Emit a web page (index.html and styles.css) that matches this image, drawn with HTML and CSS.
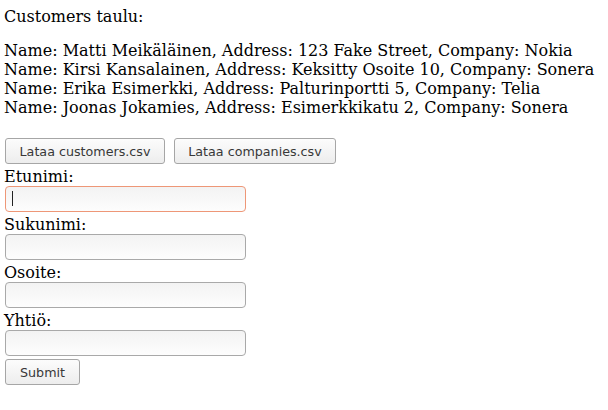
FILE: index.html
```html
<!DOCTYPE html>
<html>
<head>
<meta charset="utf-8">
<link rel="stylesheet" href="styles.css">
</head>
<body>
<div class="title">Customers taulu:</div>
<div class="list">
  <div class="row">Name: Matti Meikäläinen, Address: 123 Fake Street, Company: Nokia</div>
  <div class="row">Name: Kirsi Kansalainen, Address: Keksitty Osoite 10, Company: Sonera</div>
  <div class="row">Name: Erika Esimerkki, Address: Palturinportti 5, Company: Telia</div>
  <div class="row">Name: Joonas Jokamies, Address: Esimerkkikatu 2, Company: Sonera</div>
</div>
<div class="actions">
  <button class="btn btn-customers">Lataa customers.csv</button>
  <button class="btn btn-companies">Lataa companies.csv</button>
</div>
<form class="form">
  <label class="label">Etunimi:</label>
  <span class="field-wrap"><input class="field focused" type="text"><span class="caret"></span></span>
  <label class="label">Sukunimi:</label>
  <input class="field" type="text">
  <label class="label">Osoite:</label>
  <input class="field" type="text">
  <label class="label">Yhtiö:</label>
  <input class="field" type="text">
  <button class="btn btn-submit" type="button">Submit</button>
</form>
</body>
</html>
```
FILE: styles.css
```css
html, body {
  margin: 0;
  background: #ffffff;
}
body {
  padding: 7px 4px 0 4px;
  font-family: "DejaVu Serif", serif;
  font-size: 16px;
  color: #000000;
}
.title {
  line-height: 19px;
}
.list {
  margin-top: 15px;
  line-height: 19px;
}
.row {
  white-space: nowrap;
}
.actions {
  display: flex;
  gap: 9px;
  margin-top: 21px;
  margin-left: 1px;
  margin-bottom: 3px;
}
.btn {
  box-sizing: border-box;
  height: 26px;
  margin: 0;
  padding: 0 10px;
  font-family: "DejaVu Sans", sans-serif;
  font-size: 12.7px;
  color: #383838;
  border: 1px solid #a6a6a6;
  border-radius: 3px;
  background: linear-gradient(#fcfcfc, #ededed);
}
.btn-customers { width: 160px; }
.btn-companies { width: 162px; }
.btn-submit { width: 75px; }
.form {
  display: flex;
  flex-direction: column;
  align-items: flex-start;
  margin: 0;
}
.label {
  display: block;
  line-height: 19px;
  height: 19px;
}
.field-wrap {
  position: relative;
  display: block;
  margin-left: 1px;
  margin-bottom: 3px;
}
.field {
  box-sizing: border-box;
  width: 241px;
  height: 26px;
  margin: 0 0 3px 1px;
  padding: 0 6px;
  border: 1px solid #a9a9a9;
  border-radius: 4px;
  background: linear-gradient(#f3f3f3, #fdfdfd);
  font-family: "DejaVu Sans", sans-serif;
  font-size: 13px;
  outline: none;
}
.field-wrap .field {
  margin: 0;
}
.field.focused {
  border-color: #ee9777;
}
.caret {
  position: absolute;
  left: 7px;
  top: 5px;
  width: 1px;
  height: 15px;
  background: #222222;
}
.btn-submit {
  margin-left: 1px;
}
```
